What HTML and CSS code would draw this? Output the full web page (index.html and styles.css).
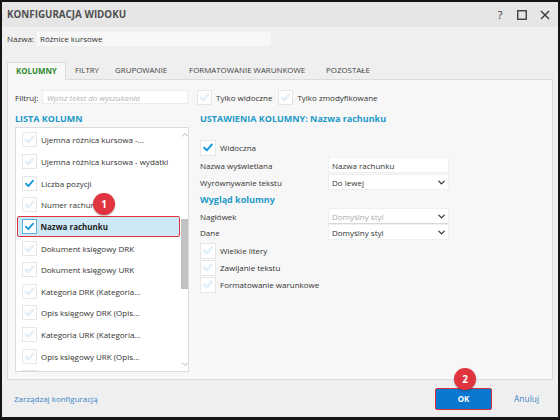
FILE: index.html
```html
<!DOCTYPE html>
<html lang="pl">
<head>
<meta charset="utf-8">
<title>Konfiguracja widoku</title>
<link rel="stylesheet" href="styles.css">
</head>
<body>
<svg class="defs" width="0" height="0" aria-hidden="true">
  <defs>
    <symbol id="chk-on" viewBox="0 0 16 16">
      <path d="M3.6 8.2 L6.6 11.2 L12.4 4.6" fill="none" stroke="#1a9bd8" stroke-width="2.3" stroke-linecap="round" stroke-linejoin="round"/>
    </symbol>
    <symbol id="chk-off" viewBox="0 0 16 16">
      <path d="M3.6 8.2 L6.6 11.2 L12.4 4.6" fill="none" stroke="#cfe5f2" stroke-width="2.6" stroke-linecap="round" stroke-linejoin="round"/>
      <path d="M3.6 8.2 L6.6 11.2 L12.4 4.6" fill="none" stroke="#ffffff" stroke-width="1.1" stroke-linecap="round" stroke-linejoin="round"/>
    </symbol>
    <symbol id="chev" viewBox="0 0 10 10">
      <path d="M2 3.5 L5 6.5 L8 3.5" fill="none" stroke="#333" stroke-width="1.4" stroke-linecap="round" stroke-linejoin="round"/>
    </symbol>
  </defs>
</svg>
<div class="dialog">
  <div class="titlebar">
    <span class="title">KONFIGURACJA WIDOKU</span>
    <div class="win-btns">
      <span class="help">?</span>
      <svg class="wbtn" width="10" height="10" viewBox="0 0 10 10"><rect x="0.75" y="0.75" width="8.5" height="8.5" fill="none" stroke="#333" stroke-width="1.3"/></svg>
      <svg class="wbtn" width="10" height="10" viewBox="0 0 10 10"><path d="M1 1 L9 9 M9 1 L1 9" stroke="#333" stroke-width="1.3"/></svg>
    </div>
  </div>

  <div class="name-row">
    <span class="lbl">Nazwa:</span>
    <div class="name-input">Różnice kursowe</div>
  </div>

  <div class="tabs">
    <div class="tab active">KOLUMNY</div>
    <div class="tab t-filtry">FILTRY</div>
    <div class="tab t-grup">GRUPOWANIE</div>
    <div class="tab t-format">FORMATOWANIE WARUNKOWE</div>
    <div class="tab">POZOSTAŁE</div>
  </div>

  <div class="panel">
    <div class="filter-row">
      <span class="lbl">Filtruj:</span>
      <div class="filter-input">Wpisz tekst do wyszukania</div>
      <span class="cb"><svg><use href="#chk-off"/></svg></span>
      <span class="cb-text">Tylko widoczne</span>
      <span class="cb"><svg><use href="#chk-off"/></svg></span>
      <span class="cb-text">Tylko zmodyfikowane</span>
    </div>

    <div class="columns">
      <div class="left">
        <div class="section-title">LISTA KOLUMN</div>
        <div class="listbox">
          <div class="items">
            <div class="item"><span class="cb"><svg><use href="#chk-off"/></svg></span><span>Ujemna różnica kursowa -...</span></div>
            <div class="item"><span class="cb"><svg><use href="#chk-off"/></svg></span><span>Ujemna różnica kursowa - wydatki</span></div>
            <div class="item"><span class="cb"><svg><use href="#chk-on"/></svg></span><span>Liczba pozycji</span></div>
            <div class="item"><span class="cb"><svg><use href="#chk-off"/></svg></span><span>Numer rachunku</span></div>
            <div class="item selected"><span class="cb"><svg><use href="#chk-on"/></svg></span><span>Nazwa rachunku</span></div>
            <div class="item"><span class="cb"><svg><use href="#chk-off"/></svg></span><span>Dokument księgowy DRK</span></div>
            <div class="item"><span class="cb"><svg><use href="#chk-off"/></svg></span><span>Dokument księgowy URK</span></div>
            <div class="item"><span class="cb"><svg><use href="#chk-off"/></svg></span><span>Kategoria DRK (Kategoria...</span></div>
            <div class="item"><span class="cb"><svg><use href="#chk-off"/></svg></span><span>Opis księgowy DRK (Opis...</span></div>
            <div class="item"><span class="cb"><svg><use href="#chk-off"/></svg></span><span>Kategoria URK (Kategoria...</span></div>
            <div class="item"><span class="cb"><svg><use href="#chk-off"/></svg></span><span>Opis księgowy URK (Opis...</span></div>
            <div class="item"><span class="cb"><svg><use href="#chk-off"/></svg></span></div>
          </div>
          <div class="scrollbar">
            <svg class="sarrow" width="8" height="6" viewBox="0 0 8 6"><path d="M1 4.5 L4 1.5 L7 4.5" fill="none" stroke="#b5b5b5" stroke-width="1"/></svg>
            <div class="track"><div class="thumb"></div></div>
            <svg class="sarrow" width="8" height="6" viewBox="0 0 8 6"><path d="M1 1.5 L4 4.5 L7 1.5" fill="none" stroke="#b5b5b5" stroke-width="1"/></svg>
          </div>
        </div>
      </div>

      <div class="right">
        <div class="section-title">USTAWIENIA KOLUMNY: Nazwa rachunku</div>
        <div class="cb-row first"><span class="cb"><svg><use href="#chk-on"/></svg></span><span>Widoczna</span></div>
        <div class="form-row"><span class="flabel">Nazwa wyświetlana</span><div class="field">Nazwa rachunku</div></div>
        <div class="form-row"><span class="flabel">Wyrównywanie tekstu</span><div class="field select">Do lewej<svg><use href="#chev"/></svg></div></div>
        <div class="sub-title">Wygląd kolumny</div>
        <div class="form-row"><span class="flabel">Nagłówek</span><div class="field select placeholder">Domyślny styl<svg><use href="#chev"/></svg></div></div>
        <div class="form-row"><span class="flabel">Dane</span><div class="field select">Domyślny styl<svg><use href="#chev"/></svg></div></div>
        <div class="cb-row"><span class="cb"><svg><use href="#chk-off"/></svg></span><span>Wielkie litery</span></div>
        <div class="cb-row"><span class="cb"><svg><use href="#chk-off"/></svg></span><span>Zawijanie tekstu</span></div>
        <div class="cb-row"><span class="cb"><svg><use href="#chk-off"/></svg></span><span>Formatowanie warunkowe</span></div>
      </div>
    </div>
  </div>

  <div class="footer">
    <a class="link">Zarządzaj konfiguracją</a>
    <div class="actions">
      <button class="ok">OK</button>
      <a class="link cancel">Anuluj</a>
    </div>
  </div>

  <span class="badge badge-1">1</span>
  <span class="badge badge-2">2</span>
</div>
</body>
</html>
```

FILE: styles.css
```css
* { box-sizing: border-box; }
html, body { margin: 0; padding: 0; }
body {
  font-family: "Open Sans", "Noto Sans", sans-serif;
  font-size: 8px;
  color: #333;
  background: #fff;
}
.defs { position: absolute; width: 0; height: 0; overflow: hidden; }

.dialog {
  position: relative;
  width: 560px;
  height: 420px;
  border: 2px solid #151515;
  border-bottom-width: 3px;
  background: #efefef;
  display: flex;
  flex-direction: column;
}

.titlebar {
  height: 25px;
  flex: none;
  background: #e6e6e6;
  display: flex;
  align-items: center;
  justify-content: space-between;
  padding: 0 8px 0 5px;
}
.title { font-size: 9.8px; font-weight: 700; color: #4f4f4f; }
.win-btns { display: flex; align-items: center; gap: 13px; }
.help { font-size: 11px; color: #333; line-height: 1; width: 8px; text-align: center; }
.wbtn { display: block; }

.name-row {
  height: 35px;
  flex: none;
  display: flex;
  align-items: flex-start;
  padding: 5px 0 0 5px;
}
.name-row .lbl { line-height: 14px; width: 30px; }
.name-input {
  width: 234px;
  height: 14px;
  line-height: 14px;
  background: #f7f7f7;
  padding-left: 3px;
}

.tabs {
  height: 17px;
  flex: none;
  display: flex;
  padding-left: 5px;
  position: relative;
  z-index: 1;
}
.tab {
  padding: 0 9px;
  line-height: 17px;
  font-size: 7.9px;
  color: #444;
}
.t-filtry { padding: 0 8px 0 9px; }
.t-grup { padding: 0 11px 0 8px; }
.t-format { padding: 0 12px 0 11px; }
.tab.active {
  background: #f7f7f7;
  border: 1px solid #dcdcdc;
  border-bottom: none;
  height: 18px;
  color: #2f8a2f;
  font-weight: 700;
  padding: 0 9px 0 8px;
  width: 59px;
}

.panel {
  height: 301px;
  flex: none;
  margin: 0 5px;
  background: #f7f7f7;
  border: 1px solid #dcdcdc;
  padding: 10px 8px 7px 7px;
  display: flex;
  flex-direction: column;
}

.filter-row {
  display: flex;
  align-items: center;
  height: 14px;
}
.filter-row .lbl { width: 27px; }
.filter-input {
  width: 146px;
  height: 14px;
  line-height: 14px;
  background: #fff;
  border: 1px solid #ececec;
  padding-left: 4px;
  color: #b4b4b4;
  font-style: italic;
  margin-right: 9px;
}
.cb {
  width: 15px;
  height: 15px;
  flex: none;
  background: #fff;
  border: 1px solid #e6e6e6;
  display: inline-flex;
  align-items: center;
  justify-content: center;
}
.cb svg { width: 15px; height: 15px; display: block; }
.cb-text { margin-left: 4px; margin-right: 6px; }

.columns {
  display: flex;
  gap: 11px;
  margin-top: 7px;
  flex: 1;
}
.left { width: 174px; display: flex; flex-direction: column; }
.section-title {
  height: 16px;
  line-height: 16px;
  font-size: 9px;
  font-weight: 700;
  color: #1d9ac8;
  white-space: nowrap;
}

.listbox {
  height: 245px;
  background: #fff;
  border: 1px solid #dcdcdc;
  display: flex;
  overflow: hidden;
}
.items { flex: 1; padding: 1px 0 0 1px; }
.item {
  height: 21.65px;
  display: flex;
  align-items: center;
  padding-left: 5px;
  white-space: nowrap;
  font-size: 8px;
}
.item .cb { margin-right: 4px; }
.item.selected {
  background: #cee9f6;
  border: 1.5px solid #e2343f;
  border-radius: 2px;
  font-weight: 700;
  color: #222;
  padding-left: 3.5px;
  width: 163px;
}
.item.selected .cb { border-color: #5fb0de; }

.scrollbar {
  width: 10px;
  flex: none;
  display: flex;
  flex-direction: column;
  align-items: center;
  padding: 4px 0 4px;
  margin-right: 1px;
}
.sarrow { display: block; flex: none; }
.track { flex: 1; width: 8px; padding-top: 81px; }
.thumb { width: 8px; height: 70px; background: #c2c2c2; }

.right { flex: 1; display: flex; flex-direction: column; }
.cb-row {
  height: 17px;
  display: flex;
  align-items: center;
}
.cb-row .cb { width: 16px; height: 16px; margin-right: 4px; }
.cb-row.first { margin-top: 12px; margin-bottom: 1px; }
.form-row {
  height: 16px;
  margin-bottom: 1px;
  display: flex;
  align-items: center;
}
.flabel { width: 128px; flex: none; }
.field {
  width: 121px;
  height: 16px;
  line-height: 15px;
  background: #fff;
  border: 1px solid #efefef;
  padding-left: 3px;
  position: relative;
}
.field.select svg {
  position: absolute;
  right: 2px;
  top: 3px;
  width: 9px;
  height: 9px;
}
.field.placeholder { color: #aaa; border-bottom-color: #d8d8d8; }
.sub-title {
  height: 17px;
  line-height: 17px;
  font-size: 9px;
  font-weight: 700;
  color: #1d9ac8;
}
.sub-title + .form-row { margin-bottom: 0; }
.form-row + .cb-row:not(.first) { margin-top: 1px; }

.footer {
  flex: 1;
  display: flex;
  align-items: center;
  justify-content: space-between;
  padding: 0 19px 0 12px;
}
.link { color: #3a86c8; font-size: 8px; text-decoration: none; }
.cancel { font-size: 8.4px; }
.actions { display: flex; align-items: center; gap: 22px; }
.ok {
  width: 57px;
  height: 22px;
  background: #0b78cf;
  border: 1.5px solid #d8303a;
  border-radius: 2px;
  color: #fff;
  font-family: inherit;
  font-weight: 700;
  font-size: 8px;
  padding: 0;
}

.badge {
  position: absolute;
  width: 22px;
  height: 22px;
  border-radius: 50%;
  background: #e0343e;
  color: #fff;
  font-size: 10px;
  font-weight: 700;
  line-height: 22px;
  text-align: center;
  box-shadow: 0 1px 2px rgba(0,0,0,0.3);
  z-index: 5;
}
.badge-1 { left: 91px; top: 191px; }
.badge-2 { left: 452px; top: 366px; }
```
